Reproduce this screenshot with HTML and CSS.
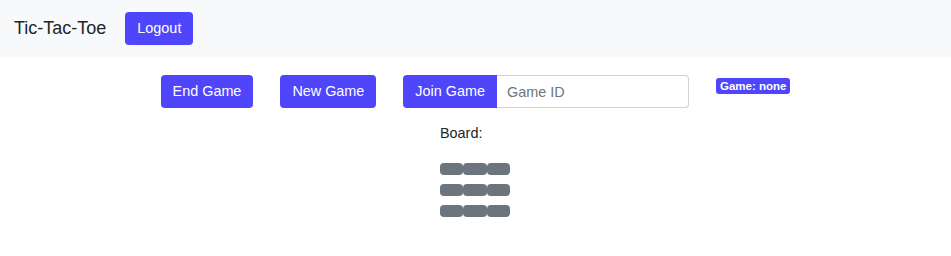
FILE: index.html
```html
<!DOCTYPE html>
<html>
<head>
<meta charset="utf-8">
<link rel="stylesheet" href="styles.css">
</head>
<body>
<nav class="navbar">
  <span class="brand">Tic-Tac-Toe</span>
  <button class="btn">Logout</button>
</nav>
<main class="main">
  <div class="controls">
    <button class="btn">End Game</button>
    <button class="btn">New Game</button>
    <div class="input-group">
      <button class="btn btn-join">Join Game</button>
      <input class="game-id" type="text" placeholder="Game ID">
    </div>
    <span class="badge">Game: none</span>
  </div>
  <div class="board-wrap">
    <div class="board-label">Board:</div>
    <div class="board">
      <div class="row"><span class="cell"></span><span class="cell"></span><span class="cell"></span></div>
      <div class="row"><span class="cell"></span><span class="cell"></span><span class="cell"></span></div>
      <div class="row"><span class="cell"></span><span class="cell"></span><span class="cell"></span></div>
    </div>
  </div>
</main>
</body>
</html>
```
FILE: styles.css
```css
* { box-sizing: border-box; }
body {
  margin: 0;
  font-family: "Liberation Sans", Arial, sans-serif;
  color: #212529;
  background: #fff;
}
.navbar {
  height: 57px;
  background: #f8f9fa;
  display: flex;
  align-items: center;
  padding: 0 14px;
}
.brand {
  font-size: 18px;
  margin-right: 19px;
}
.btn {
  font-family: inherit;
  font-size: 14.4px;
  color: #fff;
  background: #4f46fc;
  border: none;
  border-radius: 4px;
  height: 33px;
  padding: 0 12px;
  line-height: 33px;
}
.main {
  padding-top: 18px;
}
.controls {
  display: flex;
  justify-content: center;
  align-items: flex-start;
  gap: 27px;
}
.input-group {
  display: flex;
}
.btn-join {
  border-radius: 4px 0 0 4px;
}
.game-id {
  width: 192px;
  height: 33px;
  border: 1px solid #ced4da;
  border-left: none;
  border-radius: 0 4px 4px 0;
  font-family: inherit;
  font-size: 14.4px;
  padding: 0 10px;
  outline: none;
}
.game-id::placeholder { color: #6c757d; }
.badge {
  margin-top: 3px;
  background: #4f46fc;
  color: #fff;
  font-size: 11.5px;
  font-weight: bold;
  border-radius: 3px;
  padding: 2px 4px;
  line-height: 12px;
}
.board-wrap {
  width: 71px;
  margin: 16px auto 0;
}
.board-label {
  font-size: 14.4px;
  line-height: 18px;
}
.board {
  margin-top: 21px;
  display: flex;
  flex-direction: column;
  gap: 9px;
}
.row {
  display: flex;
}
.cell {
  width: 23.3px;
  height: 12px;
  background: #6c757d;
  border-radius: 4px;
}
```
